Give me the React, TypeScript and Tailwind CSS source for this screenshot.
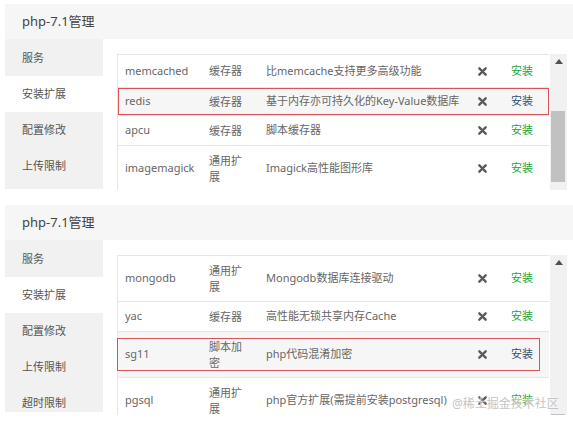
import React from "react";

type Row = {
  name: string;
  type: string;
  desc: string;
  h: number;
  marked?: boolean;
  box?: string;
};

const topRows: Row[] = [
  { name: "memcached", type: "缓存器", desc: "比memcache支持更多高级功能", h: 33 },
  { name: "redis", type: "缓存器", desc: "基于内存亦可持久化的Key-Value数据库", h: 28, marked: true, box: "inset-0" },
  { name: "apcu", type: "缓存器", desc: "脚本缓存器", h: 30 },
  { name: "imagemagick", type: "通用扩展", desc: "Imagick高性能图形库", h: 46 },
];

const bottomRows: Row[] = [
  { name: "mongodb", type: "通用扩展", desc: "Mongodb数据库连接驱动", h: 46 },
  { name: "yac", type: "缓存器", desc: "高性能无锁共享内存Cache", h: 30 },
  { name: "sg11", type: "脚本加密", desc: "php代码混淆加密", h: 46, marked: true, box: "top-[6px] bottom-[6px] left-[-1px] right-[9px]" },
  { name: "pgsql", type: "通用扩展", desc: "php官方扩展(需提前安装postgresql)", h: 46 },
];

const Cross = () => (
  <svg width="9" height="9" viewBox="0 0 10 10">
    <path d="M1.5 1.5 L8.5 8.5 M8.5 1.5 L1.5 8.5" stroke="#5a5a5a" strokeWidth="2.6" strokeLinecap="round" />
  </svg>
);

const TableRow = ({ row }: { row: Row }) => (
  <div
    className={`relative flex items-center border-b border-[#e6e6e6] ${row.marked ? "bg-[#f6f6f6]" : ""}`}
    style={{ height: row.h }}
  >
    {row.marked && <div className={`absolute border border-[#d9535a] ${row.box}`} />}
    <div className="w-[84px] shrink-0 pl-[7px]">{row.name}</div>
    <div className="w-[57px] shrink-0 pl-[7px] pr-[8px] leading-[16px]">{row.type}</div>
    <div className="w-[212px] shrink-0 pl-[7px]">{row.desc}</div>
    <div className="w-[22px] shrink-0 flex justify-center">
      <Cross />
    </div>
    <div className={`flex-1 pl-[18px] ${row.marked ? "text-[#34506f]" : "text-[#20a53a]"}`}>安装</div>
  </div>
);

const Panel = ({
  rows,
  menu,
  sideH,
  bodyH,
  thumbTop,
  thumbH,
}: {
  rows: Row[];
  menu: string[];
  sideH: number;
  bodyH: number;
  thumbTop: number;
  thumbH: number;
}) => (
  <div className="ml-[5px] w-[568px]">
    <div className="h-[35px] bg-[#f6f6f6] pl-[17px] flex items-center text-[13px] text-[#444]">php-7.1管理</div>
    <div className="flex">
      <div className="w-[98px] shrink-0 bg-[#f1f1f1] overflow-hidden pt-[1px]" style={{ height: sideH }}>
        {menu.map((m, i) => (
          <div key={m} className={`h-9 flex items-center pl-[17px] text-[#555] ${i === 1 ? "bg-white" : ""}`}>
            {m}
          </div>
        ))}
      </div>
      <div className="ml-[14px] mt-[15px] flex overflow-hidden" style={{ height: bodyH }}>
        <div className="w-[432px] border-l border-t border-[#e6e6e6] text-[#666]">
          {rows.map((r) => (
            <TableRow key={r.name} row={r} />
          ))}
        </div>
        <div className="relative w-[17px] ml-[1px] -mt-[1px] bg-[#f1f1f1]">
          <div className="flex justify-center pt-[6px]">
            <svg width="8" height="5" viewBox="0 0 8 5">
              <path d="M4 0 L8 5 L0 5 Z" fill="#505050" />
            </svg>
          </div>
          <div className="absolute left-[1px] right-[2px] bg-[#c1c1c1]" style={{ top: thumbTop, height: thumbH }} />
        </div>
      </div>
    </div>
  </div>
);

export default function App() {
  return (
    <div
      className="relative w-[573px] h-[424px] overflow-hidden bg-white text-[11px]"
      style={{ fontFamily: '"Noto Sans", "Noto Sans CJK SC", sans-serif' }}
    >
      <div className="pt-1">
        <Panel
          rows={topRows}
          menu={["服务", "安装扩展", "配置修改", "上传限制"]}
          sideH={150}
          bodyH={136}
          thumbTop={58}
          thumbH={71}
        />
      </div>
      <div className="mt-[15px]">
        <Panel
          rows={bottomRows}
          menu={["服务", "安装扩展", "配置修改", "上传限制", "超时限制"]}
          sideH={172}
          bodyH={160}
          thumbTop={160}
          thumbH={20}
        />
      </div>
      <div className="absolute left-[452px] top-[395px] text-[12px] text-[#c4c4c4] [text-shadow:0_0_2px_#fff]">
        @稀土掘金技术社区
      </div>
    </div>
  );
}
